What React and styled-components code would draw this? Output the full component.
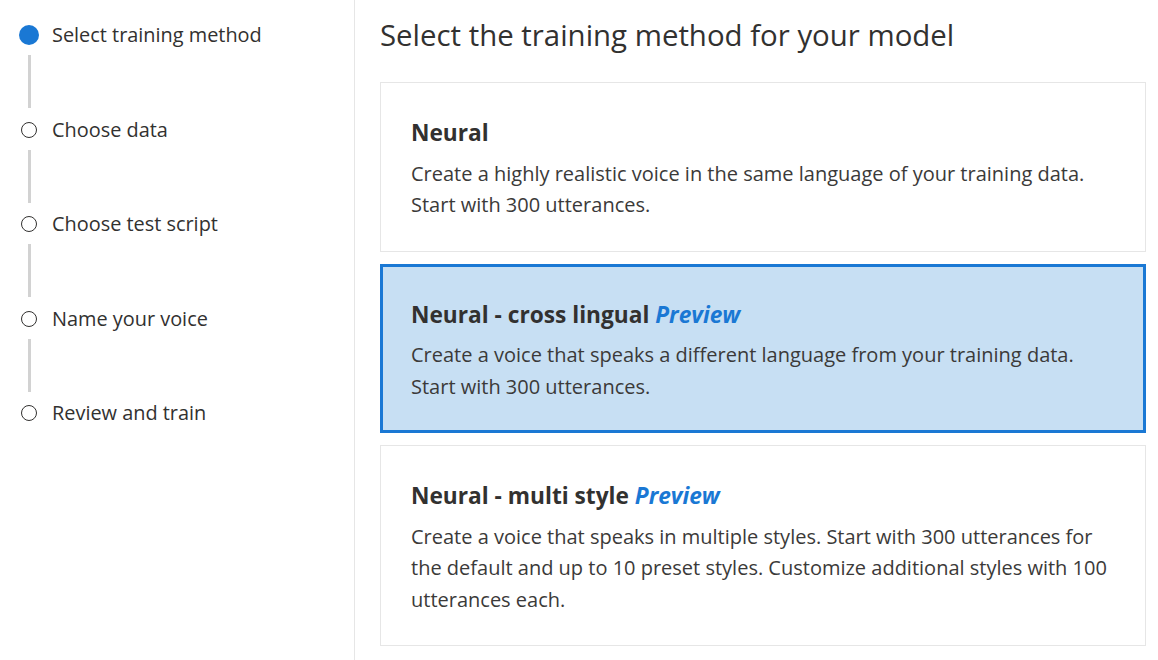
import React from "react";
import styled, { createGlobalStyle } from "styled-components";

const Global = createGlobalStyle`
  html, body { margin: 0; padding: 0; background: #fff; }
  body { font-family: "Open Sans", "Noto Sans", sans-serif; color: #323130; }
  * { box-sizing: border-box; }
`;

const Page = styled.div`
  display: flex;
  width: 1158px;
  height: 660px;
  overflow: hidden;
`;

const Sidebar = styled.nav`
  width: 355px;
  flex: none;
  border-right: 1px solid #e6e6e6;
  padding: 15px 0 0 19px;
`;

const StepRow = styled.div`
  display: flex;
  align-items: center;
  height: 40px;
`;

const MarkerCol = styled.div`
  width: 20px;
  display: flex;
  justify-content: center;
  align-items: center;
  flex: none;
`;

const Dot = styled.span`
  display: block;
  border-radius: 50%;
  width: ${(p) => (p.$active ? "20px" : "16px")};
  height: ${(p) => (p.$active ? "20px" : "16px")};
  background: ${(p) => (p.$active ? "#1a78d4" : "#fff")};
  border: ${(p) => (p.$active ? "none" : "1.5px solid #323130")};
`;

const StepLabel = styled.span`
  margin-left: 13px;
  font-size: 19.9px;
  line-height: 40px;
  color: #323130;
`;

const Connector = styled.div`
  width: 20px;
  height: 54.5px;
  display: flex;
  justify-content: center;
`;

const ConnectorLine = styled.span`
  display: block;
  width: 3px;
  height: 53px;
  background: #d2d2d2;
`;

const Main = styled.main`
  flex: 1;
  padding: 15px 12px 0 25px;
`;

const Heading = styled.h1`
  margin: 0 0 27px;
  font-size: 29.4px;
  line-height: 40px;
  font-weight: 400;
  color: #323130;
`;

const Cards = styled.div`
  display: flex;
  flex-direction: column;
  gap: 12px;
`;

const Card = styled.div`
  border: ${(p) => (p.$selected ? "3px solid #1a78d4" : "1px solid #e6e6e6")};
  background: ${(p) => (p.$selected ? "#c7dff3" : "#fff")};
  padding: ${(p) => (p.$selected ? "34px 28px 28px" : "36px 30px 30px")};
`;

const CardTitle = styled.div`
  font-size: 22.7px;
  line-height: 28px;
  font-weight: 700;
  color: #323130;
  margin-bottom: 10.5px;
`;

const Tag = styled.em`
  color: #1a78d4;
  font-style: italic;
  font-weight: 700;
`;

const CardDesc = styled.p`
  margin: 0;
  font-size: 20px;
  line-height: 31.5px;
  color: #3b3a39;
  white-space: nowrap;
`;

const steps = [
  "Select training method",
  "Choose data",
  "Choose test script",
  "Name your voice",
  "Review and train",
];

const methods = [
  {
    title: "Neural",
    desc: (
      <>
        Create a highly realistic voice in the same language of your training data.
        <br />
        Start with 300 utterances.
      </>
    ),
  },
  {
    title: "Neural - cross lingual",
    preview: true,
    selected: true,
    desc: (
      <>
        Create a voice that speaks a different language from your training data.
        <br />
        Start with 300 utterances.
      </>
    ),
  },
  {
    title: "Neural - multi style",
    preview: true,
    desc: (
      <>
        Create a voice that speaks in multiple styles. Start with 300 utterances for
        <br />
        the default and up to 10 preset styles. Customize additional styles with 100
        <br />
        utterances each.
      </>
    ),
  },
];

export default function App() {
  return (
    <>
      <Global />
      <Page>
        <Sidebar>
          {steps.map((s, i) => (
            <React.Fragment key={s}>
              <StepRow>
                <MarkerCol>
                  <Dot $active={i === 0} />
                </MarkerCol>
                <StepLabel>{s}</StepLabel>
              </StepRow>
              {i < steps.length - 1 && (
                <Connector>
                  <ConnectorLine />
                </Connector>
              )}
            </React.Fragment>
          ))}
        </Sidebar>
        <Main>
          <Heading>Select the training method for your model</Heading>
          <Cards>
            {methods.map((m) => (
              <Card key={m.title} $selected={m.selected}>
                <CardTitle>
                  {m.title}
                  {m.preview && (
                    <>
                      {" "}
                      <Tag>Preview</Tag>
                    </>
                  )}
                </CardTitle>
                <CardDesc>{m.desc}</CardDesc>
              </Card>
            ))}
          </Cards>
        </Main>
      </Page>
    </>
  );
}
